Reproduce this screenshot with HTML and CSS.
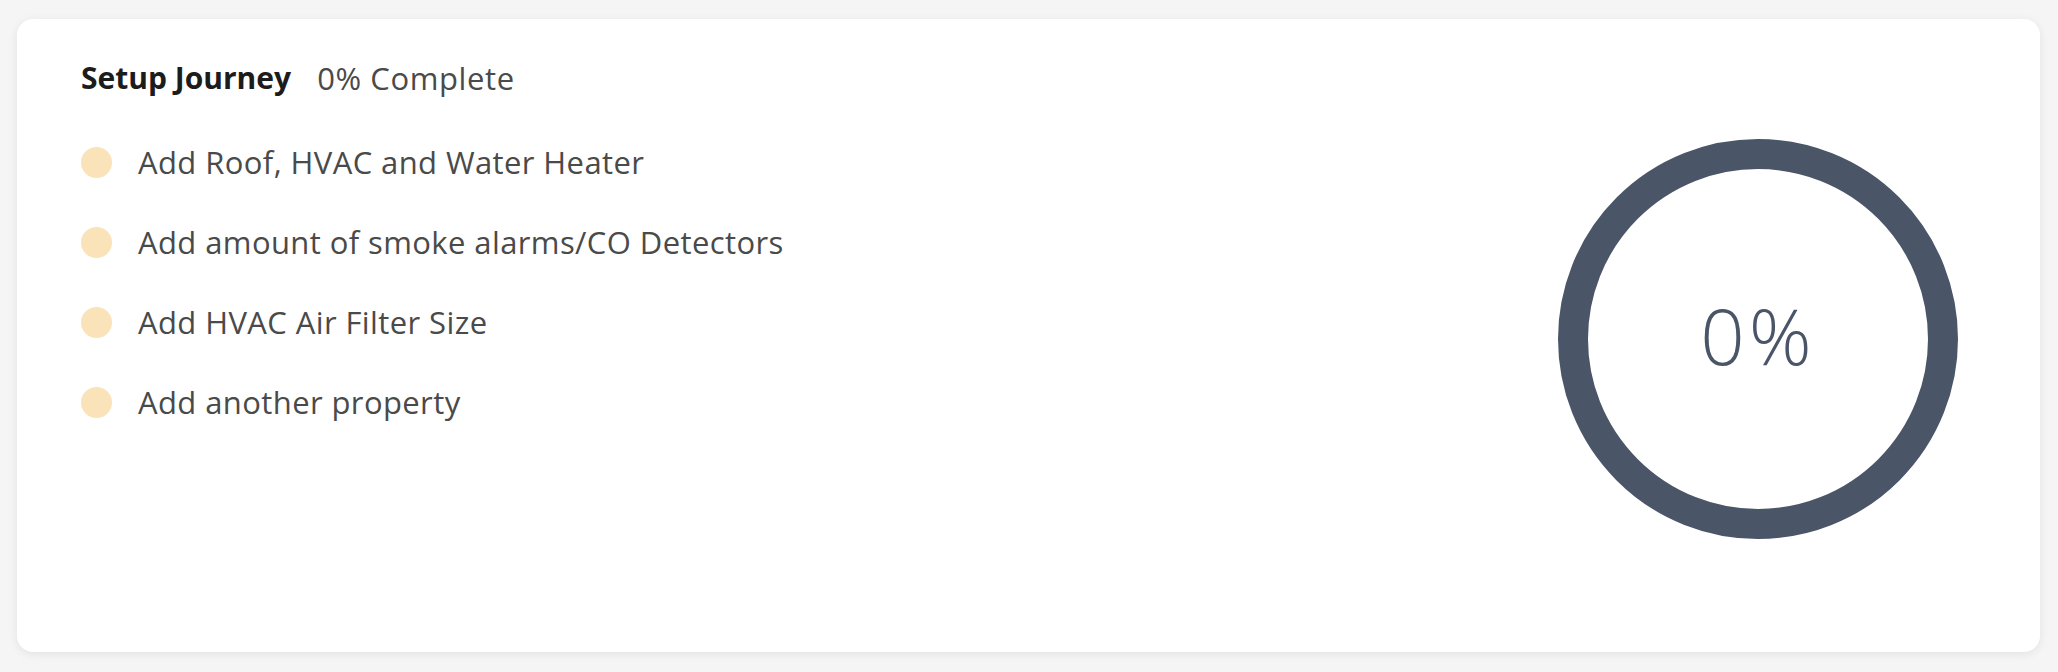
FILE: index.html
```html
<!DOCTYPE html>
<html lang="en">
<head>
<meta charset="utf-8">
<title>Setup Journey</title>
<link rel="stylesheet" href="styles.css">
</head>
<body>
<main class="page">
  <section class="card">
    <div class="journey">
      <h2 class="journey-head"><span class="journey-title">Setup Journey</span><span class="journey-progress">0% Complete</span></h2>
      <ul class="steps">
        <li class="step"><span class="dot"></span>Add Roof, HVAC and Water Heater</li>
        <li class="step"><span class="dot"></span>Add amount of smoke alarms/CO Detectors</li>
        <li class="step"><span class="dot"></span>Add HVAC Air Filter Size</li>
        <li class="step"><span class="dot"></span>Add another property</li>
      </ul>
    </div>
    <div class="ring"><span class="ring-value">0%</span></div>
  </section>
</main>
</body>
</html>
```

FILE: styles.css
```css
* { box-sizing: border-box; }
html, body { margin: 0; padding: 0; }
body {
  background: #f5f5f5;
  font-family: "Open Sans", "Noto Sans", sans-serif;
  width: 2058px;
  height: 672px;
  overflow: hidden;
}
.page {
  padding: 19px 18px 20px 17px;
}
.card {
  height: 633px;
  background: #ffffff;
  border-radius: 16px;
  box-shadow: 0 2px 10px rgba(0, 0, 0, 0.08);
  display: flex;
  justify-content: space-between;
  align-items: flex-start;
  padding: 0 82px 0 64px;
}
.journey {
  padding-top: 39px;
}
.journey-head {
  margin: 0;
  display: flex;
  gap: 26px;
  font-size: 30px;
  line-height: 40px;
  font-weight: 400;
}
.journey-title {
  font-weight: 700;
  color: #1c1c1c;
}
.journey-progress {
  color: #4a4a4a;
  font-size: 31px;
  letter-spacing: 0.6px;
}
.steps {
  list-style: none;
  margin: 44px 0 0;
  padding: 0;
  display: flex;
  flex-direction: column;
  gap: 40px;
}
.step {
  display: flex;
  align-items: center;
  gap: 26px;
  font-size: 31px;
  line-height: 40px;
  letter-spacing: 0.4px;
  color: #4a4a4a;
}
.dot {
  width: 31px;
  height: 31px;
  border-radius: 50%;
  background: #fae3b8;
  flex: none;
}
.ring {
  margin-top: 120px;
  width: 400px;
  height: 400px;
  border: 30px solid #4a5568;
  border-radius: 50%;
  display: flex;
  align-items: center;
  justify-content: center;
}
.ring-value {
  font-family: "Open Sans", sans-serif;
  font-weight: 300;
  font-size: 78px;
  letter-spacing: 4px;
  color: #4a5568;
  line-height: 1;
  margin-top: -8px;
}
```
